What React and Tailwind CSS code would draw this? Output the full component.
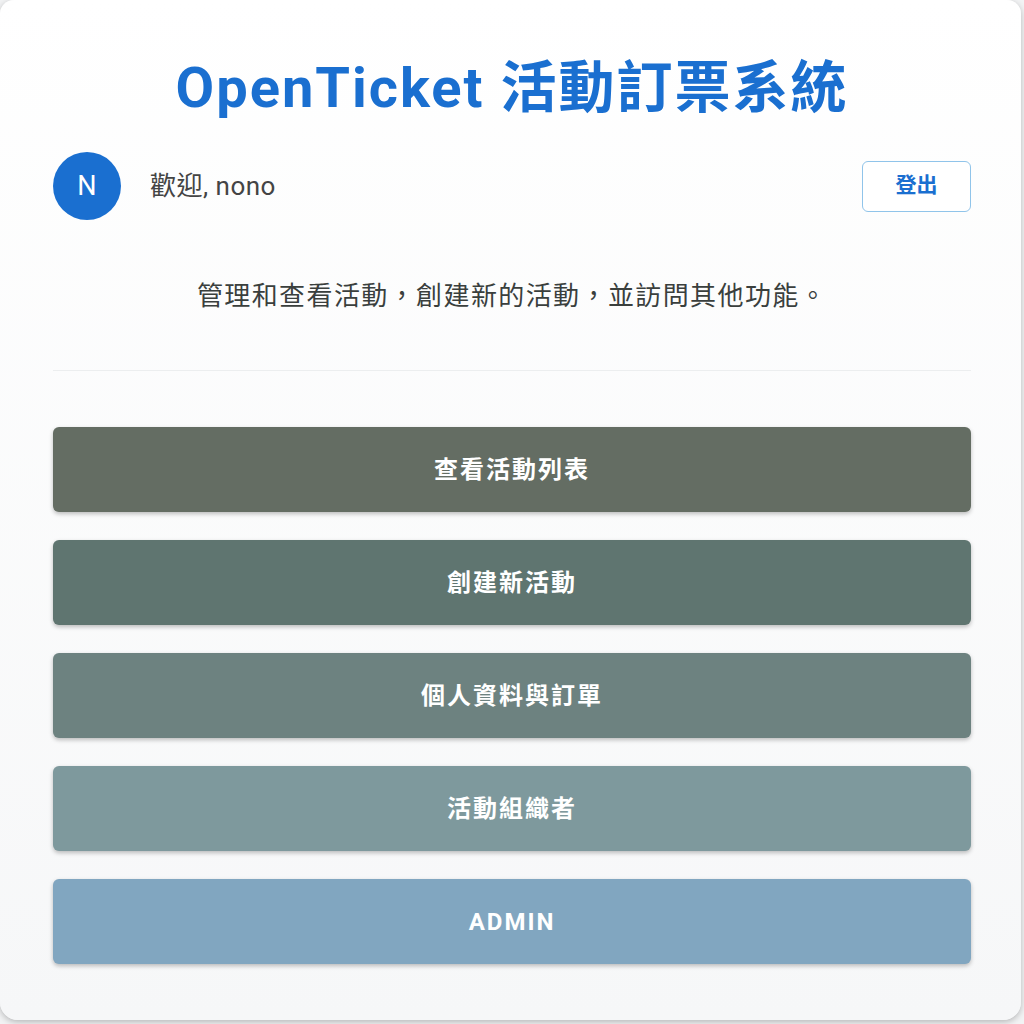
const menuItems = [
  { label: '查看活動列表', className: 'bg-[#646d63]' },
  { label: '創建新活動', className: 'bg-[#5f7570]' },
  { label: '個人資料與訂單', className: 'bg-[#6d8280]' },
  { label: '活動組織者', className: 'bg-[#7e999d]' },
  { label: 'ADMIN', className: 'bg-[#81a6c0]' },
];

const font = "font-['Roboto','Noto_Sans_CJK_TC',sans-serif]";

export default function App() {
  return (
    <div className={`min-h-screen w-[1024px] bg-[#f2f3f4] ${font}`}>
      <div className="flex h-[1020px] w-[1021px] flex-col rounded-b-[18px] rounded-t-[14px] bg-gradient-to-b from-white to-[#f6f7f8] pl-[53px] pr-[50px] pt-[56px] shadow-[0_2px_6px_rgba(0,0,0,0.25)]">
        {/* Title */}
        <h1 className="text-center text-[56px] font-bold leading-[64px] tracking-[2px] text-[#1a6fd0]">
          OpenTicket 活動訂票系統
        </h1>

        {/* User row */}
        <div className="mt-[32px] flex items-center justify-between">
          <div className="flex items-center gap-[29px]">
            <div className="flex h-[68px] w-[68px] items-center justify-center rounded-full bg-[#1a6fd0] text-[27px] text-white">
              N
            </div>
            <span className="text-[26px] tracking-[0.5px] text-[#444]">歡迎, nono</span>
          </div>
          <button className="h-[51px] w-[109px] rounded-[6px] border border-[#90c4ea] bg-white text-[21px] font-bold text-[#1a6fd0]">
            登出
          </button>
        </div>

        {/* Description */}
        <p className="mt-[60px] text-center text-[26px] leading-[32px] tracking-[1.4px] text-[#3a3f3d]">
          管理和查看活動，創建新的活動，並訪問其他功能。
        </p>

        <div className="mt-[58px] h-px bg-[#eceeef]" />

        {/* Menu */}
        <div className="mt-[56px] flex flex-col gap-[28px]">
          {menuItems.map((item) => (
            <button
              key={item.label}
              className={`h-[85px] w-full rounded-[6px] text-[24px] font-bold tracking-[2px] text-white shadow-[0_2px_4px_rgba(0,0,0,0.25)] ${item.className}`}
            >
              {item.label}
            </button>
          ))}
        </div>
      </div>
    </div>
  );
}
